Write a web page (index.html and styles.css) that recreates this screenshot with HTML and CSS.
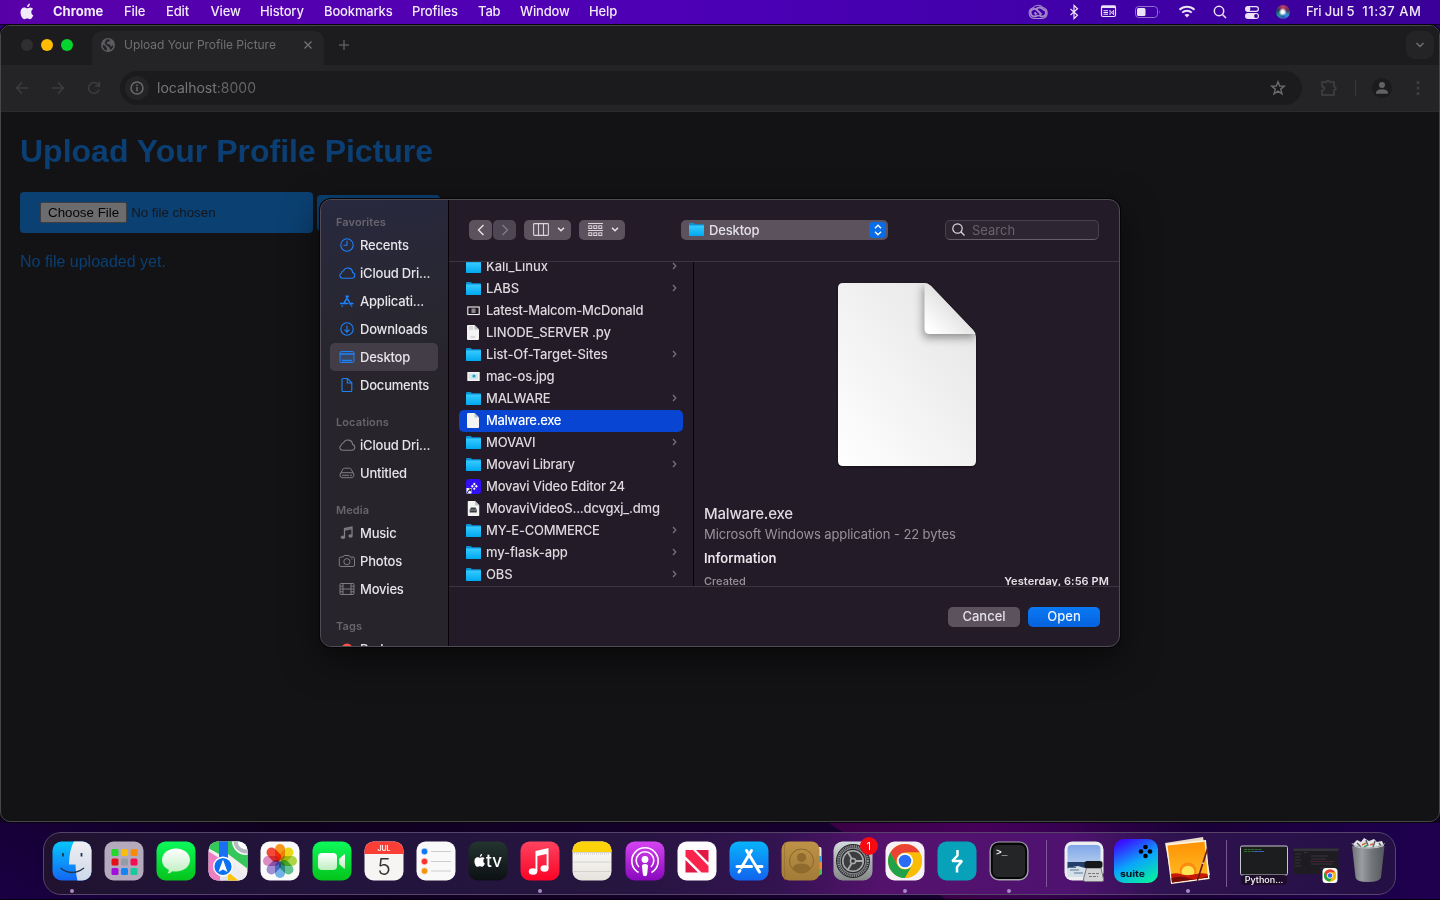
FILE: index.html
```html
<!DOCTYPE html>
<html lang="en">
<head>
<meta charset="utf-8">
<title>Upload Your Profile Picture</title>
<link rel="stylesheet" href="styles.css">
</head>
<body>
<svg class="defs" width="0" height="0" aria-hidden="true">
  <defs>
    <linearGradient id="gFolder" x1="0" y1="0" x2="0" y2="1"><stop offset="0" stop-color="#35cbff"/><stop offset="1" stop-color="#00a8f0"/></linearGradient>
    <linearGradient id="gDoc" x1="0" y1="1" x2="1" y2="0"><stop offset="0" stop-color="#ffffff"/><stop offset="1" stop-color="#e4e4e4"/></linearGradient>
    <linearGradient id="gFold" x1="0" y1="1" x2="1" y2="0"><stop offset="0.1" stop-color="#ffffff"/><stop offset="0.55" stop-color="#e2e2e2"/></linearGradient>
    <linearGradient id="gGreen" x1="0" y1="0" x2="0" y2="1"><stop offset="0" stop-color="#0cf95b"/><stop offset="1" stop-color="#04c41b"/></linearGradient>
    <linearGradient id="gWhite" x1="0" y1="0" x2="0" y2="1"><stop offset="0" stop-color="#fff"/><stop offset="1" stop-color="#bdeebf"/></linearGradient>
    <linearGradient id="gFinder" x1="0" y1="0" x2="0" y2="1"><stop offset="0" stop-color="#06c8fc"/><stop offset="1" stop-color="#1465f5"/></linearGradient>
    <linearGradient id="gFace" x1="0" y1="0" x2="0" y2="1"><stop offset="0" stop-color="#f0eef3"/><stop offset="1" stop-color="#cdd9e8"/></linearGradient>
    <linearGradient id="gTv" x1="0" y1="0" x2="0" y2="1"><stop offset="0" stop-color="#23342f"/><stop offset="1" stop-color="#0c1013"/></linearGradient>
    <linearGradient id="gMusic" x1="0" y1="0" x2="0" y2="1"><stop offset="0" stop-color="#fc4360"/><stop offset="1" stop-color="#fb0326"/></linearGradient>
    <linearGradient id="gPod" x1="0" y1="0" x2="0" y2="1"><stop offset="0" stop-color="#d644f2"/><stop offset="1" stop-color="#8a08bd"/></linearGradient>
    <linearGradient id="gStore" x1="0" y1="0" x2="0" y2="1"><stop offset="0" stop-color="#07b4fc"/><stop offset="1" stop-color="#1263ee"/></linearGradient>
    <linearGradient id="gGrey" x1="0" y1="0" x2="0" y2="1"><stop offset="0" stop-color="#d3dbe0"/><stop offset="1" stop-color="#878787"/></linearGradient>
    <linearGradient id="gBook" x1="0" y1="0" x2="0" y2="1"><stop offset="0" stop-color="#bd9247"/><stop offset="1" stop-color="#a27b38"/></linearGradient>
    <linearGradient id="gPaper" x1="0" y1="0" x2="0" y2="1"><stop offset="0" stop-color="#fff"/><stop offset="1" stop-color="#e6e2dc"/></linearGradient>
    <linearGradient id="gSuite" x1="0.3" y1="0" x2="0.8" y2="1"><stop offset="0" stop-color="#3a10ff"/><stop offset="0.5" stop-color="#0aa6fb"/><stop offset="1" stop-color="#05f0a0"/></linearGradient>
    <linearGradient id="gSun" x1="0" y1="0" x2="0" y2="1"><stop offset="0" stop-color="#ff9204"/><stop offset="0.75" stop-color="#ffb41e"/></linearGradient>
    <linearGradient id="gSea" x1="0" y1="0" x2="0" y2="1"><stop offset="0" stop-color="#7ea6e8"/><stop offset="1" stop-color="#d7e5f2"/></linearGradient>
    <linearGradient id="gBin" x1="0" y1="0" x2="1" y2="0"><stop offset="0" stop-color="#6e7276"/><stop offset="0.3" stop-color="#9a9ea2"/><stop offset="0.6" stop-color="#73777b"/><stop offset="1" stop-color="#54585c"/></linearGradient>
    <filter id="soft" x="-50%" y="-50%" width="200%" height="200%"><feGaussianBlur stdDeviation="4"/></filter>
    <clipPath id="clipIcon"><rect x="0.5" y="0.5" width="39" height="39" rx="9"/></clipPath>
    <clipPath id="clipDoc"><path d="M5 0H86Q90 0 93 3L135 47Q138 50 138 54V178Q138 183 133 183H5Q0 183 0 178V5Q0 0 5 0Z"/></clipPath>
  </defs>
  <symbol id="folder" viewBox="0 0 15 13"><path d="M0 1Q0 0 1 0H4.6L6 1.2H14Q15 1.2 15 2V12Q15 13 14 13H1Q0 13 0 12Z" fill="#0a94d6"/><path d="M0 2.6H15V12Q15 13 14 13H1Q0 13 0 12Z" fill="url(#gFolder)"/></symbol>
  <symbol id="doc" viewBox="0 0 12 15"><path d="M1 0H7.5L12 4.5V14Q12 15 11 15H1Q0 15 0 14V1Q0 0 1 0Z" fill="#f3f3f3"/><path d="M7.5 0V4.5H12Z" fill="#c4c4c4"/></symbol>
  <symbol id="chev" viewBox="0 0 5 8"><path d="M1 1L3.8 4L1 7" fill="none" stroke="#7a747d" stroke-width="1.2"/></symbol>
  <symbol id="cloud" viewBox="0 0 18 14"><path d="M4.2 12.2H13.800A2.900 2.900 0 0 0 14.600 6.500A4.800 4.800 0 0 0 5.500 4.700A2.600 2.600 0 0 0 3.400 6.900A2.800 2.800 0 0 0 4.200 12.200Z" fill="none" stroke="currentColor" stroke-width="1.100"/></symbol>
  <symbol id="apple" viewBox="0 0 14 17"><path d="M9.9.4C9 .5 7 1.6 7.1 4.1 8.700 4.200 10.100 2.300 9.900.4ZM13.300 12.200C12.500 14.300 11.200 16.200 9.900 16.200 8.800 16.200 8.500 15.500 7.200 15.500 5.800 15.500 5.400 16.200 4.400 16.200 2.600 16.200.500 12.800.500 9.300.500 6.200 2.300 4.500 4.300 4.500 5.500 4.500 6.500 5.300 7.200 5.300 7.900 5.300 9.100 4.400 10.500 4.400 11.300 4.500 12.400 4.900 13 5.900 10.500 7.300 11 11.300 13.300 12.200Z" fill="currentColor"/></symbol>
  <symbol id="chromeLogo" viewBox="0 0 34 34"><circle cx="17" cy="17" r="17" fill="#fbbc05"/><path d="M2.300 8.500A17 17 0 0 1 31.700 8.500H17A8.500 8.500 0 0 0 9.600 21.200Z" fill="#ea4335"/><path d="M2.300 8.500A17 17 0 0 0 17 34L24.400 21.200A8.500 8.500 0 0 1 9.600 21.200Z" fill="#1fa24a"/><path d="M31.700 8.500A17 17 0 0 1 17 34L24.400 21.200A8.500 8.500 0 0 0 17 8.500Z" fill="#fbbc05"/><circle cx="17" cy="17" r="8" fill="#fff"/><circle cx="17" cy="17" r="6.300" fill="#2a6df4"/></symbol>
</svg>

<header class="menubar">
  <nav class="menus">
    <svg class="apple" width="14" height="17"><use href="#apple"/></svg>
    <b>Chrome</b><span>File</span><span>Edit</span><span>View</span><span>History</span><span>Bookmarks</span><span>Profiles</span><span>Tab</span><span>Window</span><span>Help</span>
  </nav>
  <div class="status">
    <svg width="24" height="24" viewBox="0 0 24 24" fill="none" stroke="#a58bc9"><path d="M8 18.500H16A5.600 5.600 0 0 0 17 7.500A6.500 6.500 0 0 0 7 7.800A5.500 5.500 0 0 0 8 18.500Z" stroke-width="1.100"/><path d="M12.500 15.300Q10.500 16.500 8.300 16.500A3.800 3.800 0 1 1 11 10L15.500 14.500M8.500 12.500L10.500 14.500M10.300 8.800A4.500 4.500 0 0 1 17 9.200A3.700 3.700 0 0 1 15.800 16.500Q14.500 16.500 13 15" stroke-width="1.900"/></svg>
    <svg width="24" height="24" viewBox="0 0 24 24" fill="none" stroke="#ece4f6" stroke-width="1.200"><path d="M8.500 9L15.500 15.200L12 18.500V5.500L15.500 8.800L8.500 15"/></svg>
    <svg width="24" height="24" viewBox="0 0 24 24"><rect x="5.500" y="6" width="14" height="10.500" rx="1.500" fill="none" stroke="#ece4f6" stroke-width="1.200"/><path d="M5.500 5.500H19.500V8H5.500Z" fill="#ece4f6"/><path d="M7.500 10.700H12M7.500 12.500H12M7.500 14.300H12" stroke="#ece4f6" stroke-width="1.100"/><path d="M14 10.500L17.500 14.500M17.500 10.500L14 14.500M14 10V15M17.500 10V15" stroke="#ece4f6" stroke-width="0.800"/></svg>
    <svg width="26" height="24" viewBox="0 0 26 24"><rect x="0.500" y="6.500" width="22" height="11" rx="3.200" fill="none" stroke="#8f70d0"/><rect x="2" y="8" width="8.500" height="8" rx="1.500" fill="#ece4f6"/><path d="M24 10.300Q25.500 12 24 13.700Z" fill="#8f70d0"/></svg>
    <svg width="24" height="24" viewBox="0 0 24 24" fill="none" stroke="#ece4f6" stroke-width="1.900"><path d="M4.500 9.700A11 11 0 0 1 19.500 9.700M7.200 12.600A7 7 0 0 1 16.800 12.600"/><path d="M9.500 14.900Q12 13 14.500 14.900L12 17.500Z" fill="#ece4f6" stroke="none"/></svg>
    <svg width="24" height="24" viewBox="0 0 24 24" fill="none" stroke="#ece4f6" stroke-width="1.500"><circle cx="11" cy="11" r="4.700"/><path d="M14.500 14.500L18 18"/></svg>
    <svg width="24" height="24" viewBox="0 0 24 24"><rect x="5.600" y="6.600" width="12.800" height="4.800" rx="2.400" fill="none" stroke="#ece4f6" stroke-width="1.200"/><circle cx="8" cy="9" r="2.400" fill="#ece4f6"/><rect x="5" y="13" width="14" height="6" rx="3" fill="#ece4f6"/><circle cx="16" cy="16" r="1.900" fill="#3e00a3"/></svg>
    <i class="siri"></i>
    <span class="clock"><span>Fri Jul 5</span><span class="time">11:37 AM</span></span>
  </div>
</header>

<main class="browser">
  <div class="tabstrip">
    <div class="lights"><i></i><i class="min"></i><i class="max"></i></div>
    <div class="tab">
      <svg width="14" height="14" viewBox="0 0 14 14"><circle cx="7" cy="7" r="7" fill="#5b5c60"/><path d="M1.500 6.500L4.500 8L6 10.500L5.500 12.800Q1.800 11.500 1.500 6.500ZM5.500 1.600L9.200 1.400L8.300 3.200L6 4L5.800 5.800L9 6.500L9.800 8.500L12.500 7Q12.300 10.500 9.500 12L8 9L5 7L3.500 5Z" fill="#242426"/></svg>
      <span>Upload Your Profile Picture</span>
      <svg width="10" height="10" viewBox="0 0 10 10"><path d="M1.500 1.500L8.500 8.500M8.500 1.500L1.500 8.500" stroke="#717173" stroke-width="1.400"/></svg>
    </div>
    <svg class="newtab" width="10" height="10" viewBox="0 0 10 10"><path d="M5 0V10M0 5H10" stroke="#58585a" stroke-width="1.500"/></svg>
    <div class="tabsearch"><svg width="10" height="6" viewBox="0 0 10 6"><path d="M1.500 1L5 4.500L8.500 1" fill="none" stroke="#6f6f71" stroke-width="1.500"/></svg></div>
  </div>
  <div class="toolbar">
    <svg width="14" height="14" viewBox="0 0 14 14" fill="none" stroke="#3d3d3f" stroke-width="1.500"><path d="M13 7H1.500M7 1.500L1.500 7L7 12.500"/></svg>
    <svg width="14" height="14" viewBox="0 0 14 14" fill="none" stroke="#3d3d3f" stroke-width="1.500"><path d="M1 7H12.500M7 1.500L12.500 7L7 12.500"/></svg>
    <svg width="14" height="14" viewBox="0 0 14 14" fill="none" stroke="#3d3d3f" stroke-width="1.500"><path d="M12.200 8.500A5.400 5.400 0 1 1 11.200 3.500L12 4.500M12.400 0.800V5H8.200"/></svg>
    <div class="omnibox">
      <span class="info"><svg width="14" height="14" viewBox="0 0 14 14"><circle cx="7" cy="7" r="6" fill="none" stroke="#6a6a6c" stroke-width="1.500"/><path d="M7 6V10.300M7 3.600V5.100" stroke="#6a6a6c" stroke-width="1.500"/></svg></span>
      <span class="url">localhost<em>:8000</em></span>
      <svg width="16" height="16" viewBox="0 0 16 16"><path d="M8 1.800L9.700 6L14.300 6.200L10.700 9.100L12 13.800L8 11.200L4 13.800L5.300 9.100L1.700 6.200L6.300 6Z" fill="none" stroke="#6a6a6c" stroke-width="1.400"/></svg>
    </div>
    <svg class="ext" width="18" height="18" viewBox="0 0 18 18"><path d="M2 3H6.500Q6.500 1.200 8 1.200T9.500 3H14V7.500Q16 7.700 16 9.200T14 11V16H2V11.500Q4.300 11 4.300 9.400T2 7.500Z" fill="none" stroke="#414143" stroke-width="1.500"/></svg>
    <i class="bar"></i>
    <span class="avatar"><svg width="14" height="14" viewBox="0 0 14 14" fill="#626264"><circle cx="7" cy="4" r="3"/><path d="M1 12.800V11.500Q2 8.300 7 8.300T13 11.500V12.800Z"/></svg></span>
    <svg class="dots" width="4" height="16" viewBox="0 0 4 16" fill="#414143"><circle cx="2" cy="2.500" r="1.500"/><circle cx="2" cy="8" r="1.500"/><circle cx="2" cy="13.500" r="1.500"/></svg>
  </div>
  <section class="page">
    <h1>Upload Your Profile Picture</h1>
    <div class="form">
      <div class="filebox"><span class="choose">Choose File</span><span>No file chosen</span></div>
      <div class="submit"></div>
    </div>
    <p>No file uploaded yet.</p>
  </section>
</main>

<section class="dialog">
  <aside class="side">
    <h2>Favorites</h2>
    <div class="place"><svg width="18" height="16" viewBox="0 0 18 16" fill="none" stroke="currentColor" stroke-width="1.100"><circle cx="9" cy="8" r="6.200"/><path d="M9 3.800V8.200H5.500"/></svg><span>Recents</span></div>
    <div class="place"><svg width="18" height="14"><use href="#cloud"/></svg><span>iCloud Dri...</span></div>
    <div class="place"><svg width="18" height="16" viewBox="0 0 18 16" fill="none" stroke="currentColor" stroke-width="1.500"><path d="M7.800 2.500L13.200 12.500M10.500 2.500L5.800 10.500M2 10.500H10.500M12.500 10.500H15.500M4.600 12.500L4 13.500M13.500 13L14 13.700"/></svg><span>Applicati...</span></div>
    <div class="place"><svg width="18" height="16" viewBox="0 0 18 16" fill="none" stroke="currentColor" stroke-width="1.100"><circle cx="9" cy="8" r="6.200"/><path d="M9 4.500V11M6.500 8.700L9 11.200L11.500 8.700"/></svg><span>Downloads</span></div>
    <div class="place on"><svg width="18" height="16" viewBox="0 0 18 16"><rect x="2" y="2.500" width="14" height="11" rx="1.200" fill="#1b82fb" fill-opacity="0.150" stroke="currentColor"/><path d="M2 5H16M4 11.500H14" stroke="currentColor" stroke-width="1.400"/></svg><span>Desktop</span></div>
    <div class="place"><svg width="18" height="16" viewBox="0 0 18 16" fill="none" stroke="currentColor" stroke-width="1.100"><path d="M5 1.500H9.500L13.800 5.800V13.500Q13.800 14.500 12.800 14.500H5Q4 14.500 4 13.500V2.500Q4 1.500 5 1.500ZM9.300 1.500V6H13.800"/></svg><span>Documents</span></div>
    <h2>Locations</h2>
    <div class="place grey"><svg width="18" height="14"><use href="#cloud"/></svg><span>iCloud Dri...</span></div>
    <div class="place grey"><svg width="18" height="16" viewBox="0 0 18 16" fill="none" stroke="currentColor"><path d="M2.500 8.500L5 4Q5.400 3.200 6.400 3.200H11.600Q12.600 3.200 13 4L15.500 8.500M4 7.700H14Q16 7.700 16 10T14 12.700H4Q2 12.700 2 10T4 7.700ZM4 10.300H11M12 10.300H14"/></svg><span>Untitled</span></div>
    <h2>Media</h2>
    <div class="place grey"><svg width="18" height="16" viewBox="0 0 18 16"><path d="M6.500 12V3.500L14 2V10.800M6.500 5.200L14 3.700" fill="none" stroke="currentColor" stroke-width="1.300"/><ellipse cx="5" cy="12.300" rx="2.200" ry="1.800" fill="currentColor"/><ellipse cx="12.500" cy="11" rx="2.200" ry="1.800" fill="currentColor"/></svg><span>Music</span></div>
    <div class="place grey"><svg width="18" height="16" viewBox="0 0 18 16" fill="none" stroke="currentColor"><path d="M2.800 4H5L6.200 2.500H11L12.200 4H15Q16.500 4 16.500 5.500V12Q16.500 13.500 15 13.500H2.800Q1.300 13.500 1.300 12V5.500Q1.300 4 2.800 4Z"/><circle cx="8.900" cy="8.700" r="3.100"/><path d="M13.300 6H14.500"/></svg><span>Photos</span></div>
    <div class="place grey"><svg width="18" height="16" viewBox="0 0 18 16" fill="none" stroke="currentColor"><rect x="2" y="2.500" width="14" height="11" rx="1"/><path d="M5 2.500V13.500M13 2.500V13.500M5 8H13M2 5.200H5M2 8H5M2 10.800H5M13 5.200H16M13 8H16M13 10.800H16"/></svg><span>Movies</span></div>
    <h2>Tags</h2>
    <div class="place red"><svg width="18" height="12" viewBox="0 0 18 12"><circle cx="9" cy="6" r="5.500" fill="#ff5147"/></svg><span>Red</span></div>
  </aside>

  <div class="pane">
    <div class="tools">
      <div class="btn back"><svg width="8" height="12" viewBox="0 0 8 12"><path d="M6.500 1L1.500 6L6.500 11" fill="none" stroke="#e6e3e7" stroke-width="1.400"/></svg></div>
      <div class="btn fwd"><svg width="8" height="12" viewBox="0 0 8 12"><path d="M1.500 1L6.500 6L1.500 11" fill="none" stroke="#837c86" stroke-width="1.400"/></svg></div>
      <div class="btn view"><svg width="16" height="13" viewBox="0 0 16 13"><path d="M1.500 0.600H14.500Q15.400 0.600 15.400 1.500V11.500Q15.400 12.400 14.500 12.400H1.500Q0.600 12.400 0.600 11.500V1.500Q0.600 0.600 1.500 0.600ZM5.500 0.600V12.400M10.500 0.600V12.400" fill="none" stroke="#d9d5da" stroke-width="1.100"/></svg><svg width="8" height="5" viewBox="0 0 8 5"><path d="M1 0.800L4 3.800L7 0.800" fill="none" stroke="#e6e3e7" stroke-width="1.500"/></svg></div>
      <div class="btn group"><svg width="15" height="14" viewBox="0 0 15 14" fill="none" stroke="#d9d5da"><path d="M0 0.500H15M0 7.500H15"/><rect x="0.800" y="2.800" width="3" height="2.700"/><rect x="5.800" y="2.800" width="3" height="2.700"/><rect x="10.800" y="2.800" width="3" height="2.700"/><rect x="0.800" y="9.800" width="3" height="2.700"/><rect x="5.800" y="9.800" width="3" height="2.700"/><rect x="10.800" y="9.800" width="3" height="2.700"/></svg><svg width="8" height="5" viewBox="0 0 8 5"><path d="M1 0.800L4 3.800L7 0.800" fill="none" stroke="#e6e3e7" stroke-width="1.500"/></svg></div>
      <div class="btn where"><svg width="15" height="13"><use href="#folder"/></svg><span>Desktop</span><i><svg width="8" height="12" viewBox="0 0 8 12"><path d="M1 4.300L4 1.300L7 4.300M1 7.700L4 10.700L7 7.700" fill="none" stroke="#fff" stroke-width="1.400"/></svg></i></div>
      <div class="search"><svg width="13" height="13" viewBox="0 0 13 13" fill="none" stroke="#dedae0" stroke-width="1.200"><circle cx="5.500" cy="5.500" r="4.700"/><path d="M9 9L12.500 12.500"/></svg><span>Search</span></div>
    </div>
    <div class="cols">
      <div class="list">
        <div class="row"><svg width="15" height="13"><use href="#folder"/></svg><span>Kali_Linux</span><svg width="5" height="8"><use href="#chev"/></svg></div>
        <div class="row"><svg width="15" height="13"><use href="#folder"/></svg><span>LABS</span><svg width="5" height="8"><use href="#chev"/></svg></div>
        <div class="row tight"><svg width="15" height="13" viewBox="0 0 15 13"><rect x="1.800" y="3" width="11.400" height="7.500" fill="#1d1820" stroke="#f0f0f0" stroke-width="1.100"/><path d="M5.500 4.500H9.500V9H5.500Z" fill="#8b858e"/></svg><span>Latest-Malcom-McDonald</span></div>
        <div class="row"><svg width="15" height="15" viewBox="-1 0 15 15"><use href="#doc" width="12" height="15"/><path d="M2 2H6M2 4H6M3.500 12H8" stroke="#b3b3b3" stroke-width="0.800"/></svg><span>LINODE_SERVER .py</span></div>
        <div class="row"><svg width="15" height="13"><use href="#folder"/></svg><span>List-Of-Target-Sites</span><svg width="5" height="8"><use href="#chev"/></svg></div>
        <div class="row tight"><svg width="15" height="13" viewBox="0 0 15 13"><rect x="1.300" y="2" width="12.400" height="9" fill="#f4f4f4"/><rect x="3" y="3.500" width="9" height="6" fill="#cfe6ee"/><circle cx="8" cy="6" r="1.600" fill="#1aa3b6"/></svg><span>mac-os.jpg</span></div>
        <div class="row tight"><svg width="15" height="13"><use href="#folder"/></svg><span>MALWARE</span><svg width="5" height="8"><use href="#chev"/></svg></div>
        <div class="row sel"><svg width="15" height="15" viewBox="-1 0 15 15"><use href="#doc" width="12" height="15"/></svg><span>Malware.exe</span></div>
        <div class="row tight"><svg width="15" height="13"><use href="#folder"/></svg><span>MOVAVI</span><svg width="5" height="8"><use href="#chev"/></svg></div>
        <div class="row tight"><svg width="15" height="13"><use href="#folder"/></svg><span>Movavi Library</span><svg width="5" height="8"><use href="#chev"/></svg></div>
        <div class="row tight"><svg width="15" height="15" viewBox="0 0 15 15"><rect width="15" height="15" rx="3" fill="#3210f6"/><path d="M4.800 7.300L6.300 5.800L7.800 7.300L6.300 8.800ZM8.800 7.300L10.300 5.800L11.800 7.300L10.300 8.800ZM6.900 5L8.300 3.600L9.700 5L8.300 6.400ZM6.900 9.700L8.300 8.300L9.700 9.700L8.300 11.100Z" fill="#fff"/><rect x="0.500" y="9" width="5" height="5.500" fill="#fff"/><path d="M1.500 14Q1.500 11 4.300 11M2.800 10H4.700V12.300" stroke="#111" fill="none"/></svg><span>Movavi Video Editor 24</span></div>
        <div class="row tight"><svg width="15" height="15" viewBox="-1 0 15 15"><use href="#doc" width="12" height="15" transform="translate(0.500 0)"/><path d="M4 6.500H8.500L9.800 9V11.500H2.700V9Z" fill="#3a3d40"/><path d="M2.700 9H9.800" stroke="#8a8f93"/></svg><span>MovaviVideoS...dcvgxj_.dmg</span></div>
        <div class="row tight"><svg width="15" height="13"><use href="#folder"/></svg><span>MY-E-COMMERCE</span><svg width="5" height="8"><use href="#chev"/></svg></div>
        <div class="row"><svg width="15" height="13"><use href="#folder"/></svg><span>my-flask-app</span><svg width="5" height="8"><use href="#chev"/></svg></div>
        <div class="row"><svg width="15" height="13"><use href="#folder"/></svg><span>OBS</span><svg width="5" height="8"><use href="#chev"/></svg></div>
      </div>
      <div class="preview">
        <svg class="bigdoc" width="138" height="183" viewBox="0 0 138 183">
          <g clip-path="url(#clipDoc)"><rect width="138" height="183" fill="url(#gDoc)"/><path d="M86 0V46Q86 51 91 51H138V30L110 0Z" fill="#555" opacity="0.600" filter="url(#soft)" transform="translate(-1 4)"/><path d="M86.500 0V46Q86.500 51 91.500 51H138V30L110 0Z" fill="url(#gFold)"/></g>
        </svg>
        <div class="name">Malware.exe</div>
        <div class="kind">Microsoft Windows application - 22 bytes</div>
        <div class="infohead">Information</div>
        <div class="meta"><span>Created</span><b>Yesterday, 6:56 PM</b></div>
      </div>
    </div>
    <div class="foot"><div class="cancel">Cancel</div><div class="open">Open</div></div>
  </div>
</section>

<footer class="dock">
  <div class="app run"><svg viewBox="0 0 40 40"><g clip-path="url(#clipIcon)"><rect width="40" height="40" fill="url(#gFinder)"/><path d="M22 0Q17 10 17 23.500H23.500Q23.500 32 25.500 40H40V0Z" fill="url(#gFace)"/></g><path d="M11 12V15.500M29.500 12V15.500" stroke="#22364e" stroke-width="1.800"/><path d="M8.500 27Q20 36 32 27" fill="none" stroke="#22364e" stroke-width="1.500"/></svg></div>
  <div class="app"><svg viewBox="0 0 40 40"><rect x="0.500" y="0.500" width="39" height="39" rx="9" fill="#b3aabd"/><g><rect x="7.500" y="8" width="7" height="7" rx="1.500" fill="#22d62c"/><rect x="17" y="8" width="7" height="7" rx="1.500" fill="#f7bd0c"/><rect x="26.500" y="8" width="7" height="7" rx="1.500" fill="#f98b0b"/><rect x="7.500" y="17.500" width="7" height="7" rx="1.500" fill="#e60f18"/><rect x="17" y="17.500" width="7" height="7" rx="1.500" fill="#949ca4"/><rect x="26.500" y="17.500" width="7" height="7" rx="1.500" fill="#f60d50"/><rect x="7.500" y="27" width="7" height="7" rx="1.500" fill="#a10fdc"/><rect x="17" y="27" width="7" height="7" rx="1.500" fill="#1385f5"/><rect x="26.500" y="27" width="7" height="7" rx="1.500" fill="#17c99b"/></g></svg></div>
  <div class="app"><svg viewBox="0 0 40 40"><rect x="0.500" y="0.500" width="39" height="39" rx="9" fill="url(#gGreen)"/><path d="M20 7.500C28 7.500 34 12.500 34 19S28 30.500 20 30.500Q18 30.500 16.500 30.200Q14.500 32.500 11.300 32.500Q13 30.800 12.800 28.800Q6 25.500 6 19C6 12.500 12 7.500 20 7.500Z" fill="url(#gWhite)"/></svg></div>
  <div class="app"><svg viewBox="0 0 40 40"><g clip-path="url(#clipIcon)"><rect width="40" height="40" fill="#f3f1f0"/><path d="M0 0H11V13L0 7Z" fill="#35c759"/><path d="M20 0H40V28L20 13Z" fill="#35c759"/><circle cx="38" cy="0" r="14" fill="#fff"/><circle cx="38" cy="0" r="10.500" fill="none" stroke="#b5b9c2" stroke-width="4"/><path d="M0 10L16 20V40H0Z" fill="#ef7fc4"/><path d="M11 0H20V30H11Z" fill="#1a6ff5"/><path d="M20 18L40 37V40H20Z" fill="#ececf0"/><path d="M20 31L31 40H20Z" fill="#fcc40b"/><path d="M12 33H20V40H12Z" fill="#dfe3ec"/></g><circle cx="15" cy="25.500" r="9.300" fill="#0a72f5" stroke="#fff" stroke-width="1.400"/><path d="M15 18.500L19.500 31L15 28.500L10.500 31Z" fill="#fff"/></svg></div>
  <div class="app"><svg viewBox="0 0 40 40"><rect x="0.500" y="0.500" width="39" height="39" rx="9" fill="#fbfafb"/><g class="petals"><rect x="15" y="3" width="10" height="16.500" rx="5" fill="#fb9a1c"/><rect x="15" y="3" width="10" height="16.500" rx="5" fill="#f0dc18" transform="rotate(45 20 20)"/><rect x="15" y="3" width="10" height="16.500" rx="5" fill="#b0d944" transform="rotate(90 20 20)"/><rect x="15" y="3" width="10" height="16.500" rx="5" fill="#63c793" transform="rotate(135 20 20)"/><rect x="15" y="3" width="10" height="16.500" rx="5" fill="#74b6ea" transform="rotate(180 20 20)"/><rect x="15" y="3" width="10" height="16.500" rx="5" fill="#a392d6" transform="rotate(225 20 20)"/><rect x="15" y="3" width="10" height="16.500" rx="5" fill="#e08fc6" transform="rotate(270 20 20)"/><rect x="15" y="3" width="10" height="16.500" rx="5" fill="#f74a3c" transform="rotate(315 20 20)"/></g></svg></div>
  <div class="app"><svg viewBox="0 0 40 40"><rect x="0.500" y="0.500" width="39" height="39" rx="9" fill="url(#gGreen)"/><rect x="6" y="12" width="19" height="17" rx="4" fill="url(#gWhite)"/><path d="M27 18L32 13.500Q33 13 33 14V27Q33 28 32 27.500L27 23Z" fill="url(#gWhite)"/></svg></div>
  <div class="app"><svg viewBox="0 0 40 40"><g clip-path="url(#clipIcon)"><rect width="40" height="40" fill="#f7f5f4"/><rect width="40" height="13" fill="#fb3f37"/></g><text x="20" y="10" class="t-jul">JUL</text><text x="20" y="34" class="t-day">5</text></svg></div>
  <div class="app"><svg viewBox="0 0 40 40"><rect x="0.500" y="0.500" width="39" height="39" rx="9" fill="#faf9f9"/><g fill="none" stroke-opacity="0.350"><circle cx="8.500" cy="10.500" r="2.700" fill="#1378f8" stroke="#1378f8" stroke-width="1.500"/><circle cx="8.500" cy="20.500" r="2.700" fill="#f8352b" stroke="#f8352b" stroke-width="1.500"/><circle cx="8.500" cy="30" r="2.700" fill="#f89312" stroke="#f89312" stroke-width="1.500"/></g><path d="M15 10.500H35M15 20.500H35M15 30H35" stroke="#cdcccf"/></svg></div>
  <div class="app"><svg viewBox="0 0 40 40"><rect x="0.500" y="0.500" width="39" height="39" rx="9" fill="url(#gTv)"/><svg x="6" y="12.500" width="11.500" height="14" color="#fff"><use href="#apple"/></svg><text x="26" y="26" class="t-tv">tv</text></svg></div>
  <div class="app run"><svg viewBox="0 0 40 40"><rect x="0.500" y="0.500" width="39" height="39" rx="9" fill="url(#gMusic)"/><path d="M15.500 10L28.500 7V27.300H26.600V13L17.400 15V30.500H15.500Z" fill="#fff"/><ellipse cx="13" cy="30.500" rx="4.200" ry="3.200" fill="#fff"/><ellipse cx="24.500" cy="27.500" rx="4" ry="3.200" fill="#fff"/></svg></div>
  <div class="app"><svg viewBox="0 0 40 40"><g clip-path="url(#clipIcon)"><rect width="40" height="40" fill="url(#gPaper)"/><rect width="40" height="11" fill="#fcd20b"/></g><path d="M1 11.500H39M1 21H39M1 30.500H39" stroke="#d0ccc8" stroke-width="0.800"/><path d="M2 13H38" stroke="#bbb" stroke-width="0.800" stroke-dasharray="1 1"/></svg></div>
  <div class="app"><svg viewBox="0 0 40 40"><rect x="0.500" y="0.500" width="39" height="39" rx="9" fill="url(#gPod)"/><g fill="none" stroke="#fff" stroke-width="1.600"><path d="M13.500 31.500A13.200 13.200 0 1 1 26.500 31.500"/><path d="M14 26A8.800 8.800 0 1 1 26 26"/></g><circle cx="20" cy="18.500" r="3.400" fill="#fff"/><path d="M17 25Q17 23 20 23T23 25L22.200 33Q22 35.300 20 35.300T17.800 33Z" fill="#fff"/></svg></div>
  <div class="app"><svg viewBox="0 0 40 40"><rect x="0.500" y="0.500" width="39" height="39" rx="9" fill="#fefcfd"/><path d="M8.500 9H16L31.500 25V31.500H24.500L8.500 15.500Z" fill="#f9234c"/><path d="M19 9H31.500V21.500ZM8.500 19V31.500H21Z" fill="#e31746"/></svg></div>
  <div class="app"><svg viewBox="0 0 40 40"><rect x="0.500" y="0.500" width="39" height="39" rx="9" fill="url(#gStore)"/><path d="M17.500 9.500L30.500 31M22.500 9.500L12.500 26.500M8 25.500H22.500M28.500 25.500H33M11 29.500L10 31" fill="none" stroke="#fff" stroke-width="3" stroke-linecap="round"/></svg></div>
  <div class="app"><svg viewBox="0 0 40 40"><path d="M34 6H39Q40.500 6 40.500 8V15H34Z" fill="#e9e5df"/><path d="M34 15H41V21H34Z" fill="#2fa5dc"/><path d="M34 21H41V28H34Z" fill="#f7872a"/><path d="M34 28H41V33L36 36Z" fill="#4bc055"/><rect x="0.500" y="0.500" width="38" height="39" rx="8" fill="url(#gBook)"/><path d="M3.500 1V39" stroke="#8f6a2d" stroke-width="0.600"/><circle cx="20.500" cy="20" r="12" fill="none" stroke="#866226" stroke-width="0.900"/><circle cx="20.500" cy="16.500" r="4.600" fill="#8f6b2e"/><path d="M11.500 27.500Q13 22.500 20.500 22.500T29.500 27.500Q26 32 20.500 32T11.500 27.500Z" fill="#8f6b2e"/></svg></div>
  <div class="app"><svg viewBox="0 0 40 40"><rect x="0.500" y="0.500" width="39" height="39" rx="9" fill="url(#gGrey)"/><g fill="none"><circle cx="20" cy="20" r="17" fill="#26282a"/><circle cx="20" cy="20" r="14.800" stroke="#8b8e90" stroke-width="2.400" stroke-dasharray="1.200 0.700"/><circle cx="20" cy="20" r="12.800" stroke="#85888a" stroke-width="1.200"/><circle cx="20" cy="20" r="10.300" fill="#3b3d3f" stroke="#a9abad" stroke-width="1.600"/><path d="M20 20H31M20 20L14.500 10.500M20 20L14.500 29.500" stroke="#a9abad" stroke-width="1.800"/><circle cx="20" cy="20" r="2.600" fill="#333" stroke="#a9abad" stroke-width="1.500"/></g></svg><span class="badge">1</span></div>
  <div class="app run"><svg viewBox="0 0 40 40"><rect x="0.500" y="0.500" width="39" height="39" rx="9" fill="#f7f2f8"/><svg x="3" y="3" width="34" height="34"><use href="#chromeLogo"/></svg></svg></div>
  <div class="app"><svg viewBox="0 0 40 40"><rect x="0.500" y="0.500" width="39" height="39" rx="9" fill="#07a2b9"/><path d="M20.500 9V14.500L15.300 20H21.500M18.500 20H25L20 26V31.500" fill="none" stroke="#fff" stroke-width="2.500" stroke-linejoin="bevel"/></svg></div>
  <div class="app run"><svg viewBox="0 0 40 40"><rect x="0.500" y="0.500" width="39" height="39" rx="9" fill="#a4a6ab"/><rect x="1.800" y="1.500" width="36.400" height="36.500" rx="8" fill="#060606"/><rect x="3.800" y="4" width="32.400" height="32" rx="5.500" fill="#242527"/><text x="7" y="14" class="t-term">&gt;_</text></svg></div>
  <i class="sep"></i>
  <div class="app"><svg viewBox="0 0 40 40"><rect x="0.500" y="0.500" width="39" height="39" rx="8" fill="#eceef2"/><rect x="3.500" y="4" width="33" height="32" rx="4" fill="url(#gSea)"/><path d="M3.500 21H36.500V28H3.500Z" fill="#253f6c"/><path d="M3.500 27L14 25L28 29L36.500 28V36H3.500Z" fill="#d4dfe9"/><path d="M6 29H15M5 26.500H12M10 32H19" stroke="#5b788f"/><path d="M22.500 27L19.500 38Q19 40.500 21.500 40.500H37.500Q40.500 40.500 39.500 38L37 27Z" fill="#d3d3d5" stroke="#77787b"/><rect x="20.500" y="20" width="18" height="7" rx="2.500" fill="#17181a"/><path d="M24 32.500H35M25 35.500H34" stroke="#777" stroke-width="1.100" stroke-dasharray="3 1"/></svg></div>
  <div class="app"><svg viewBox="0 0 40 40"><rect x="-2" y="-2" width="44" height="44" rx="10" fill="url(#gSuite)"/><circle cx="29.500" cy="6" r="2.300"/><circle cx="25" cy="10.500" r="2.300"/><circle cx="34" cy="10.500" r="2.300"/><circle cx="29.500" cy="15" r="2.300"/><text x="4" y="35.500" class="t-suite" textLength="25" lengthAdjust="spacingAndGlyphs">suite</text></svg></div>
  <div class="app run"><svg viewBox="0 0 40 40"><path d="M-3 2L35 -4L42 34L4 41Z" fill="#e9dccb"/><path d="M-2 3L38 -1L41.500 38L3 43Z" fill="#fff4df"/><path d="M-0.500 4.500L36.500 0.800L40 36.500L4 41.500Z" fill="url(#gSun)"/><circle cx="20" cy="30" r="8.500" fill="#ff8a10"/><circle cx="20" cy="31" r="6.300" fill="#ffe352"/><path d="M3 33Q8 31.500 14 33.500Q21 35 28 33Q34 31.500 39.500 33L40 36.500L4 41.500Z" fill="#c91708"/><path d="M3.500 37Q14 34.500 20 37T40 35V36.500L4 41.500Z" fill="#740c0a"/><path d="M39.500 5Q41 6 40 9L30 40L28.500 41.500L29 38Z" fill="#6a1a17"/><path d="M34 22L36 22.500" stroke="#d8c7b9" stroke-width="1.500"/></svg></div>
  <i class="sep"></i>
  <div class="app"><svg viewBox="0 0 40 40"><rect x="-3.500" y="5" width="47" height="29" rx="1.500" fill="#1b1d1f" stroke="#c5c8cc"/><path d="M0 8.500H18M0 10.500H10" stroke="#2f7a2e" stroke-width="0.900" stroke-dasharray="3 0.600"/><path d="M10 10.500H20" stroke="#3b62c9" stroke-width="0.900"/></svg><span class="label">Python...</span></div>
  <div class="app"><svg viewBox="0 0 40 40"><rect x="-2.500" y="7.500" width="45" height="25.500" fill="#1e1c22"/><path d="M-2.500 8.700H42.500" stroke="#34323a" stroke-width="2.400"/><path d="M-1 13H5M-1 16H4M-1 19H5M-1 22H4M-1 25H5M8 11.500H11M15 15H32M15 18H30M15 23H36M24 27H36" stroke="#3a3640" stroke-width="0.900"/><path d="M14 20.500H38" stroke="#4a2230"/><rect x="26.500" y="27" width="15" height="15" rx="3.500" fill="#fff"/><svg x="27.800" y="28.300" width="12.400" height="12.400"><use href="#chromeLogo"/></svg></svg></div>
  <div class="app"><svg viewBox="0 0 40 40"><path d="M5 3L9 -1L13 1L16 -3L21 0L26 -2L29 1L34 0L36 5L30 9H8Z" fill="#e4e5e7"/><path d="M9 2L13 6M18 -1L20 5M27 0L25 6M31 2L33 5" stroke="#59616a" stroke-width="1.500"/><path d="M14 4L18 2M22 4L25 3" stroke="#d06a43" stroke-width="1.500"/><path d="M16 6L20 4" stroke="#38a169" stroke-width="1.500"/><path d="M4 5Q20 10 36.500 5L33 36Q32.500 41 20 41T7.500 36Z" fill="url(#gBin)"/><path d="M4 2Q3.500 5.500 20 7Q37 5.500 36.500 2" fill="none" stroke="#a2a5a8"/></svg></div>
</footer>
</body>
</html>
```
FILE: styles.css
```css
* { box-sizing: border-box; }
html, body { height: 100%; }
body {
  margin: 0;
  width: 1440px;
  height: 900px;
  overflow: hidden;
  position: relative;
  display: flex;
  flex-direction: column;
  font-family: Inter, "Liberation Sans", sans-serif;
  font-size: 13px;
  color: #e4e1e6;
  background:
    linear-gradient(90deg, transparent 68%, #1a0038 83%, #1e0050 100%) 0 823px / 1440px 77px no-repeat,
    linear-gradient(33deg, #1a0044 0, #10001f 25%, #16002f 60.700%, #3a0046 60.850%, #48005e 72%) 0 823px / 1440px 77px no-repeat,
    linear-gradient(#30007a 0, #30007a 60px, #12002a 61px);
  border-bottom: 1px solid #08000e;
}
.defs { position: absolute; }
svg { display: block; flex: none; overflow: visible; }
i { font-style: normal; }

.menubar {
  flex: none;
  height: 25px;
  padding: 0 19px 1px 20px;
  display: flex;
  justify-content: space-between;
  align-items: center;
  background: linear-gradient(90deg, #5800a8 0, #5300b2 25%, #4c00b6 50%, #4000a8 75%, #3a0098 100%);
  border-bottom: 1px solid #0c0616;
  color: #f1eaf8;
  font-weight: 500;
  white-space: nowrap;
}
.menus {
  display: grid;
  grid-template-columns: 33px 71px 42px 44.500px 49.500px 64px 88px 66px 42px 69px 40px;
  align-items: center;
  letter-spacing: -.15px;
}
.menus b, .menus span, .clock { padding-bottom: 2px; }
.menus b { font-weight: 700; letter-spacing: 0; }
.status {
  display: grid;
  grid-template-columns: 36px 34px 39px 40px 33px 32px 31px 35px 115px;
  align-items: center;
}
.siri {
  width: 14px;
  height: 14px;
  margin-left: 5px;
  border-radius: 50%;
  background: radial-gradient(circle at 48% 50%, #fff 0 14%, transparent 40%), conic-gradient(#c63a66, #57305e 20%, #2b9ad0 35%, #3a4fc0 50%, #1b9c8c 65%, #223a5c 80%, #c63a66);
}
.clock { display: flex; justify-content: space-between; letter-spacing: -.1px; }
.time { letter-spacing: .55px; margin-right: -.5px; }

.browser {
  flex: none;
  height: 797px;
  border: 1px solid #47474a;
  border-radius: 10px;
  overflow: hidden;
  background: #131315;
  box-shadow: 0 0 0 1px #08040c;
}
.tabstrip {
  height: 39px;
  display: flex;
  align-items: center;
  background: #1c1c1e;
}
.lights { display: flex; gap: 8px; margin-bottom: 2px; padding: 0 19px 0 20px; }
.lights i { width: 12px; height: 12px; border-radius: 50%; background: #2f2f31; }
.lights .min { background: #febc05; }
.lights .max { background: #06d32d; }
.tab {
  width: 232px;
  height: 34px;
  margin-top: 5px;
  padding: 0 11px 6px 9px;
  display: flex;
  align-items: center;
  background: #242426;
  border-radius: 9px 9px 0 0;
  color: #707073;
  font-size: 12px;
}
.tab span { flex: 1; padding: 0 0 2px 9px; white-space: nowrap; letter-spacing: -.04px; }
.newtab { margin: 0 0 2px 15px; }
.tabsearch {
  width: 28px;
  height: 28px;
  margin: 0 5px 2px auto;
  border-radius: 9px;
  background: #242426;
  display: grid;
  place-items: center;
}
.toolbar {
  height: 47px;
  padding: 0 19px 0 14px;
  display: flex;
  align-items: center;
  gap: 22px;
  background: #242426;
  border-bottom: 1px solid #2b2b2d;
}
.omnibox {
  flex: none;
  width: 1182px;
  height: 34px;
  margin-left: -3px;
  padding: 0 16px 0 5px;
  display: flex;
  align-items: center;
  border-radius: 17px;
  background: #1b1b1d;
}
.info { width: 24px; height: 24px; border-radius: 50%; background: #242426; display: grid; place-items: center; }
.url { flex: 1; padding: 0 0 2px 8px; font-size: 14px; color: #77777a; }
.url em { font-style: normal; color: #646467; }
.ext { margin-left: -4px; }
.bar { width: 1px; height: 16px; margin-left: -5px; background: #39393b; }
.avatar { width: 20px; height: 20px; margin-left: -6px; border-radius: 50%; background: #1b1b1d; display: grid; place-items: center; }
.dots { margin-left: 2px; }

.page { padding: 20px 19px; font-family: "Liberation Sans", Arial, sans-serif; color: #0b3f73; }
.page h1 { margin: 1px 0 0; font-size: 32px; line-height: 37px; }
.form { display: flex; align-items: center; gap: 4px; margin-top: 22px; }
.filebox {
  width: 293px;
  height: 41px;
  padding-left: 20px;
  display: flex;
  align-items: center;
  gap: 4px;
  border-radius: 4px;
  background: #0b4072;
  color: #15171b;
  font-size: 13.333px;
}
.choose { height: 21px; padding: 2px 7px; line-height: 15px; border: 1px solid #3f3f41; border-radius: 2px; background: #6c6c6e; color: #060606; }
.submit { width: 123px; height: 36px; border-radius: 4px; background: #0b4072; }
.page p { margin: 20px 0 0; font-size: 16px; line-height: 18px; }

.dialog {
  position: absolute;
  left: 320px;
  top: 199px;
  width: 800px;
  height: 448px;
  display: flex;
  border: 1px solid #514b55;
  border-radius: 11px;
  overflow: hidden;
  background: #241b28;
  box-shadow: 0 0 0 1px #050506, 0 12px 36px rgba(0, 0, 0, .55);
}
.side {
  flex: none;
  width: 128px;
  padding: 0 10px 0 9px;
  border-right: 1px solid #060408;
  background: linear-gradient(170deg, #28293f 0, #282734 20%, #27252b 38%);
  color: #e6e4e8;
  font-weight: 500;
  overflow: hidden;
  white-space: nowrap;
}
.side h2 { margin: 0; height: 32px; padding: 14px 0 0 6px; font-size: 11px; line-height: 18px; font-weight: 600; color: #67646c; letter-spacing: .1px; }
.side h2:first-child { height: 31px; padding-top: 13px; }
.place { height: 28px; padding-left: 8px; display: flex; align-items: center; gap: 4px; color: #1b82fb; border-radius: 5px; }
.place span { color: #e6e4e8; letter-spacing: -.2px; }
.place.on { background: #423d46; }
.place.grey { color: #7f7c83; }

.pane { flex: 1; min-width: 0; display: flex; flex-direction: column; }
.tools { height: 62px; flex: none; padding: 0 20px 2px; display: flex; align-items: center; border-bottom: 1px solid #3c343f; }
.btn { height: 20px; display: flex; align-items: center; justify-content: center; border-radius: 5px; background: #5b525e; }
.back { width: 23px; }
.fwd { width: 23px; margin-left: 1px; background: #4e4652; }
.view { width: 47px; margin-left: 8px; gap: 8px; padding-left: 3px; }
.group { width: 46px; margin-left: 8px; gap: 8px; padding-left: 2px; }
.where { width: 207px; margin-left: 56px; padding: 0 2px 0 8px; justify-content: flex-start; font-weight: 500; letter-spacing: -.15px; }
.where span { flex: 1; padding-left: 5px; }
.where i { width: 17px; height: 16px; border-radius: 4px; background: #0a6de8; display: grid; place-items: center; }
.search { width: 154px; height: 20px; margin-left: auto; padding-left: 6px; display: flex; align-items: center; gap: 7px; border: 1px solid #48404b; border-bottom-color: #655d67; border-radius: 5px; background: #2d2531; color: #6a636d; }

.cols { flex: 1; min-height: 0; display: flex; }
.list { width: 245px; flex: none; margin-top: -6px; padding: 0 10px; border-right: 1px solid #050306; clip-path: inset(6px 0 0 0); }
.row { height: 22px; padding: 0 6px 2px 7px; display: flex; align-items: center; border-radius: 5px; color: #dcd9de; white-space: nowrap; font-weight: 500; letter-spacing: -.1px; }
.row.tight { letter-spacing: -.23px; }
.row span { flex: 1; padding-left: 5px; }
.row.sel { background: #0845d3; color: #fff; letter-spacing: -.35px; }
.preview { flex: 1; padding: 21px 10px 0; overflow: hidden; white-space: nowrap; }
.bigdoc { margin: 0 auto 38px; position: relative; filter: drop-shadow(0 1px 1px rgba(0, 0, 0, .5)); }
.name { font-size: 15px; line-height: 20px; color: #dfdce1; font-weight: 500; letter-spacing: -.2px; }
.kind { line-height: 20px; color: #98939b; letter-spacing: -.1px; }
.infohead { margin-top: 4px; line-height: 20px; font-weight: 600; color: #eae7ec; }
.meta { display: flex; justify-content: space-between; margin-top: 5px; font-size: 11px; line-height: 16px; font-weight: 500; color: #98939b; }
.meta b { color: #e4e1e6; font-weight: 600; letter-spacing: .08px; }
.foot { height: 60px; flex: none; padding: 0 19px; display: flex; align-items: center; justify-content: flex-end; gap: 8px; border-top: 1px solid #3c343f; font-weight: 500; }
.cancel, .open { width: 72px; height: 20px; border-radius: 5px; text-align: center; line-height: 19px; background: #5b525e; }
.open { background: linear-gradient(#0b79f5, #0562dd); color: #eef4ff; }

.dock {
  width: 1353px;
  height: 63px;
  margin: 10px 0 0 43px;
  padding-left: 2px;
  display: flex;
  align-items: flex-start;
  border: 1px solid #57446a;
  border-radius: 18px;
  background: linear-gradient(90deg, #20122f 0, #22143c 20%, #25153f 42%, #32134f 54%, #54126d 62%, #4f1270 76%, #2f1250 83%, #241045 100%);
}
.app { position: relative; width: 52.060px; height: 61px; padding: 8px 6px 0; }
.app > svg { width: 40px; height: 40px; }
.petals rect { mix-blend-mode: multiply; }
.run::after { content: ""; position: absolute; left: 24px; top: 56px; width: 4px; height: 4px; border-radius: 50%; background: #a98bc6; }
.sep { width: 23.500px; height: 47px; margin-top: 7px; flex: none; background: linear-gradient(#7d5494, #7d5494) center / 1px 100% no-repeat; }
.badge { position: absolute; left: 33px; top: 4px; width: 18px; height: 18px; border-radius: 50%; background: #f50a12; color: #fff; font-size: 11px; line-height: 18px; text-align: center; }
.label { position: absolute; left: 3px; top: 42px; width: 46px; height: 10px; border-radius: 4px; background: #1d0d2b; color: #fff; font-size: 9px; font-weight: 500; line-height: 10px; text-align: center; white-space: nowrap; }
.t-jul { font: 700 7px Inter, sans-serif; fill: #ffe6e4; text-anchor: middle; }
.t-day { font: 300 23px Inter, sans-serif; fill: #333; text-anchor: middle; }
.t-tv { font: 500 17px Inter, sans-serif; fill: #fff; text-anchor: middle; }
.t-term { font: 700 9.500px "Liberation Mono", monospace; fill: #f5f5f5; }
.t-suite { font: 700 9px Inter, sans-serif; fill: #06121c; }
```
